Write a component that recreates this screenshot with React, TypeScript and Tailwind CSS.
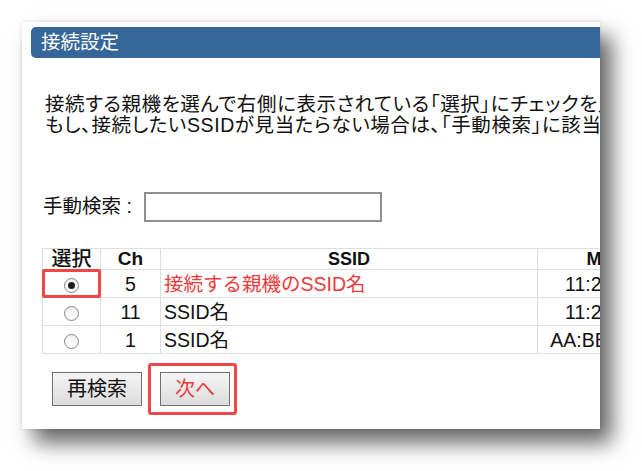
const rows = [
  { ch: "5", ssid: "接続する親機のSSID名", mac: "11:22:33:44:55:66", selected: true },
  { ch: "11", ssid: "SSID名", mac: "11:22:33:44:55:77", selected: false },
  { ch: "1", ssid: "SSID名", mac: "AA:BB:CC:DD:EE:FF", selected: false },
]

function Radio({ checked }: { checked: boolean }) {
  return (
    <span className="inline-flex w-[15px] h-[15px] rounded-full border border-[#858585] bg-gradient-to-b from-[#f0f0f0] to-white items-center justify-center align-middle">
      {checked && <span className="w-[7px] h-[7px] rounded-full bg-[#1e1e1e]" />}
    </span>
  )
}

export default function App() {
  return (
    <div className="w-[642px] h-[471px] bg-white pl-[22px] pt-[22px] font-['Liberation_Sans','Noto_Sans_CJK_JP',sans-serif] text-[#111]">
      <div className="w-[578px] h-[407px] bg-white overflow-hidden shadow-[12px_14px_20px_rgba(0,0,0,0.6),0_0_4px_rgba(0,0,0,0.12)]">
        <div className="w-[760px]">
          <div className="mt-[5px] ml-[9px] h-[31px] rounded-l-[5px] bg-[#346699] text-white text-[19.5px] leading-[31px] pl-[10px]">
            接続設定
          </div>

          <div className="mt-[36px] ml-[23px] text-[19.5px] leading-[21px] whitespace-nowrap tracking-[0.6px] [font-feature-settings:'palt']">
            <p>接続する親機を選んで右側に表示されている「選択」にチェックを入れてください。</p>
            <p>もし、接続したいSSIDが見当たらない場合は、「手動検索」に該当するSSIDを入力してください。</p>
          </div>

          <div className="mt-[56px] ml-[21px] flex items-center h-[30px]">
            <span className="text-[19.5px] w-[101px] whitespace-nowrap">手動検索 :</span>
            <input type="text" className="w-[238px] h-[30px] border-2 border-[#8f8f8f] bg-white outline-none" />
          </div>

          <table className="mt-[26px] ml-[20px] table-fixed border-collapse text-[19.5px]">
            <colgroup>
              <col className="w-[58px]" />
              <col className="w-[60px]" />
              <col className="w-[377px]" />
              <col className="w-[211px]" />
            </colgroup>
            <thead>
              <tr className="h-[21px] leading-[20px]">
                <th className="border border-[#dedede] font-medium text-[20px]">選択</th>
                <th className="border border-[#dedede] font-bold text-[19px]">Ch</th>
                <th className="border border-[#dedede] font-bold text-[18px]">SSID</th>
                <th className="border border-[#dedede] font-bold text-[18px] whitespace-nowrap">MACアドレス</th>
              </tr>
            </thead>
            <tbody>
              {rows.map((r, i) => (
                <tr key={i} className="h-[28px] leading-[26px]">
                  <td className="relative border border-[#dedede] text-center">
                    <Radio checked={r.selected} />
                    {r.selected && (
                      <span className="absolute -inset-[1px] border-[3px] border-[#f04848] rounded-[2px]" />
                    )}
                  </td>
                  <td className="border border-[#dedede] text-center">{r.ch}</td>
                  <td className={`border border-[#dedede] pl-[3px] whitespace-nowrap ${r.selected ? "text-[#ec3a3a]" : ""}`}>
                    {r.ssid}
                  </td>
                  <td className="border border-[#dedede] text-center whitespace-nowrap">{r.mac}</td>
                </tr>
              ))}
            </tbody>
          </table>

          <div className="mt-[9px] ml-[30px] flex items-center gap-[6px]">
            <button className="w-[90px] h-[34px] border border-[#707070] bg-gradient-to-b from-[#f5f5f5] to-[#dcdcdc] text-[20px] leading-[30px] text-[#111]">
              再検索
            </button>
            <div className="border-[3px] border-[#f04848] rounded-[3px] pl-[9px] pr-[4px] py-[6px]">
              <button className="w-[70px] h-[34px] border border-[#707070] bg-gradient-to-b from-[#f5f5f5] to-[#dcdcdc] text-[20px] leading-[30px] text-[#ec3a3a]">
                次へ
              </button>
            </div>
          </div>
        </div>
      </div>
    </div>
  )
}
